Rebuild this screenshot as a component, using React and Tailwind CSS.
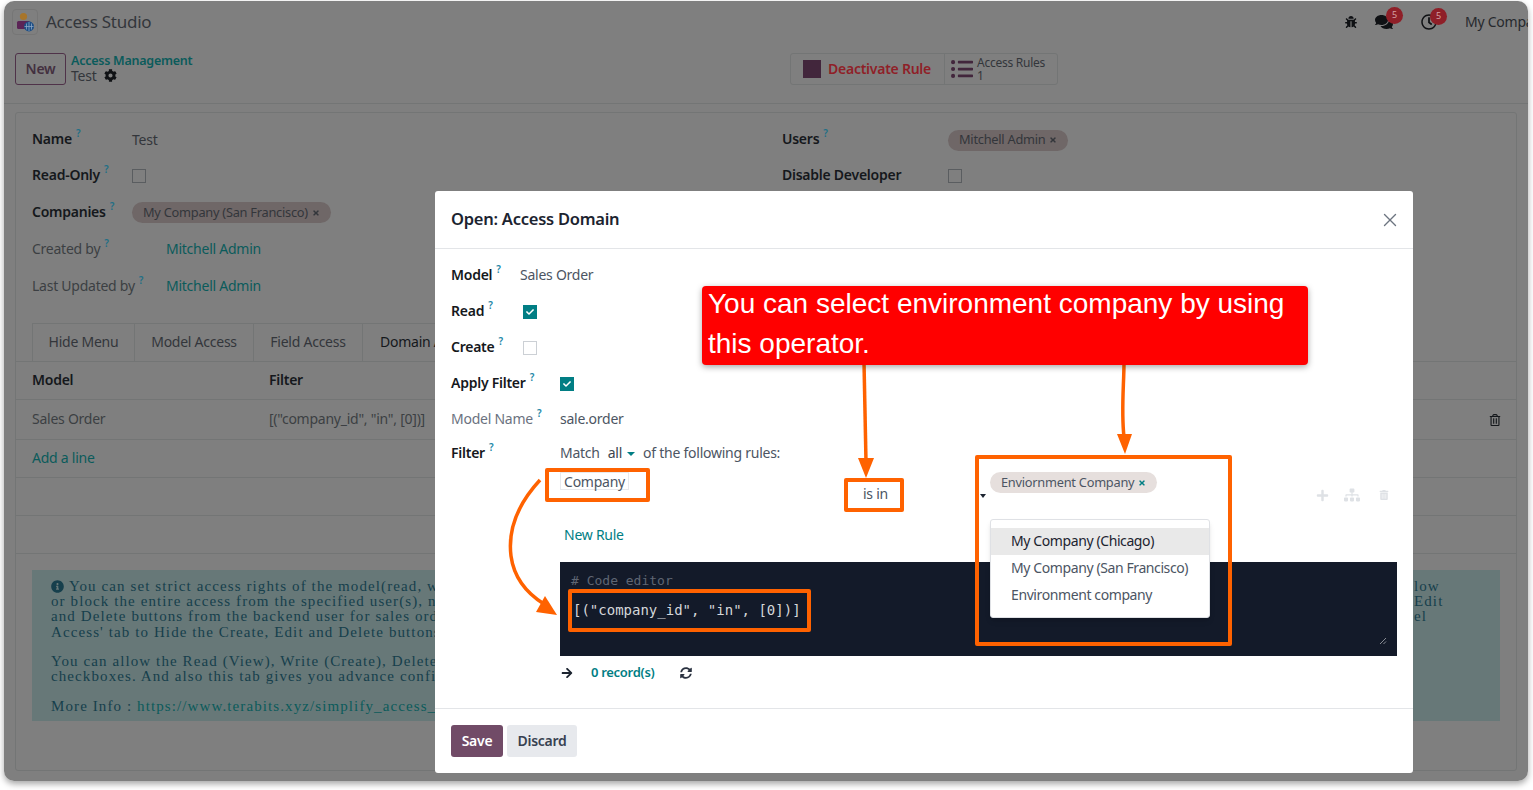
import React from "react";
import { FaBug, FaComments, FaRegClock, FaCog, FaListUl, FaRegTrashAlt, FaPlus, FaSitemap, FaTrashAlt, FaInfoCircle, FaArrowRight, FaSyncAlt, FaCheck, FaTimes } from "react-icons/fa";
import { X } from "lucide-react";

const Q = ({ c = "text-[#1f6f86]" }) => <sup className={`${c} text-[10px] ml-1 -top-[7px] relative font-semibold`}>?</sup>;

function Label({ children, w, dim, q, dimC = "text-[#3c3f43]" }) {
  return (
    <div className={`${w} shrink-0 whitespace-nowrap pb-[3px] ${dim ? `font-normal ${dimC}` : "font-semibold text-[#15181c]"}`}>
      {children}
      <Q c={q} />
    </div>
  );
}

function BgBox() {
  return <div className="w-[14px] h-[14px] border border-[#5a5d60]" />;
}

function Tag({ children }) {
  return (
    <span className="inline-flex items-center h-[21px] rounded-full bg-[#6f6767] px-[11px] text-[12.8px] text-[#33363b] whitespace-nowrap">
      {children}
      <FaTimes className="ml-1 text-[8px]" />
    </span>
  );
}

function Logo() {
  return (
    <div className="w-[26px] h-[26px] border border-[#767676] rounded-sm flex items-center justify-center">
      <svg width="22" height="22" viewBox="0 0 22 22">
        <circle cx="9.5" cy="5.5" r="3.6" fill="#a8752a" />
        <rect x="3" y="10" width="13" height="8" rx="1.5" fill="#5b2456" />
        <circle cx="15" cy="15.5" r="5" fill="#1d4f86" />
        <path d="M10.5 15.5h9M15 11v9M12.5 12.5v6M17.5 12.5v6" stroke="#8aa4c4" strokeWidth="0.8" fill="none" />
      </svg>
    </div>
  );
}

const alertRows = [
  ["You can set strict access rights of the model(read, write, create, delete),", "low", true],
  ["or block the entire access from the specified user(s), no matter which", "Edit"],
  ["and Delete buttons from the backend user for sales order, use the 'Model", "el"],
  ["Access' tab to Hide the Create, Edit and Delete buttons", ""],
  null,
  ["You can allow the Read (View), Write (Create), Delete, Export, Import", ""],
  ["checkboxes. And also this tab gives you advance configuration", ""],
  null,
];

function Background() {
  return (
    <div className="h-full flex flex-col bg-[#7f7f7f] text-[14px] text-[#33363b]">
      <div className="h-[45px] shrink-0 flex items-center pl-[8px] pr-0 pb-[4px]">
        <Logo />
        <span className="ml-[8px] text-[17px] text-[#33363b]">Access Studio</span>
        <div className="ml-auto flex items-center text-[#0f1114]">
          <FaBug className="text-[12px] mr-[18px]" />
          <span className="relative mr-[28px]">
            <FaComments className="text-[18px]" />
            <span className="absolute -top-[6px] left-[11px] w-[17px] h-[17px] rounded-full bg-[#8f1f28] text-[9px] text-[#d4a0a4] flex items-center justify-center">5</span>
          </span>
          <span className="relative mr-[28px]">
            <FaRegClock className="text-[16px]" />
            <span className="absolute -top-[6px] left-[9px] w-[17px] h-[17px] rounded-full bg-[#8f1f28] text-[9px] text-[#d4a0a4] flex items-center justify-center">5</span>
          </span>
          <span className="text-[14px] text-[#26292d] w-[63px] overflow-hidden whitespace-nowrap">My Company</span>
        </div>
      </div>
      <div className="h-[58px] shrink-0 flex items-start pt-[7px] pl-[11px] border-b border-[#737575]">
        <div className="w-[51px] h-[32px] border border-[#4f3249] rounded-[3px] flex items-center justify-center font-semibold text-[#43303f] pb-[2px]">New</div>
        <div className="ml-[5px] w-[130px] leading-[15px]">
          <div className="text-[#0b5b5b] font-semibold text-[12.5px] whitespace-nowrap">Access Management</div>
          <div className="flex items-center text-[#33363b]">Test<FaCog className="ml-2 text-[13px] text-[#101215]" /></div>
        </div>
        <div className="ml-[589px] w-[268px] h-[32px] flex border border-[#737575] rounded-[3px]">
          <div className="w-[154px] flex items-center border-r border-[#737575] pl-[12px]">
            <div className="w-[18px] h-[18px] bg-[#42263c] mr-[7px]" />
            <span className="text-[#8f1f28] font-semibold text-[14px] pb-[1px]">Deactivate Rule</span>
          </div>
          <div className="flex items-center pl-[6px]">
            <FaListUl className="text-[22px] text-[#42263c] mr-[4px]" />
            <div className="text-[12px] text-[#33363b] whitespace-nowrap">
              <div className="leading-[13px]">Access Rules</div>
              <div className="leading-[13px]">1</div>
            </div>
          </div>
        </div>
      </div>
      <div className="flex-1 px-[11px] pt-[8px] pb-[10px] flex">
        <div className="flex-1 border border-[#737575] rounded-[3px] flex flex-col overflow-hidden">
          <div className="h-[210px] shrink-0 flex pl-[16px] pt-[9px]">
            <div className="w-[750px]">
              <div className="h-[36px] flex items-center"><Label w="w-[100px]">Name</Label><span className="pb-[2px]">Test</span></div>
              <div className="h-[36px] flex items-center"><Label w="w-[100px]">Read-Only</Label><BgBox /></div>
              <div className="h-[37px] flex items-center"><Label w="w-[100px]">Companies</Label><Tag>My Company (San Francisco)</Tag></div>
              <div className="h-[37px] flex items-center"><Label w="w-[134px]" dim>Created by</Label><span className="text-[#0b5b5b] pb-[2px]">Mitchell Admin</span></div>
              <div className="h-[37px] flex items-center"><Label w="w-[134px]" dim>Last Updated by</Label><span className="text-[#0b5b5b] pb-[2px]">Mitchell Admin</span></div>
            </div>
            <div>
              <div className="h-[36px] flex items-center"><Label w="w-[166px]">Users</Label><Tag>Mitchell Admin</Tag></div>
              <div className="h-[36px] flex items-center"><div className="w-[166px] font-semibold text-[#15181c] pb-[3px]">Disable Developer</div><BgBox /></div>
            </div>
          </div>
          <div className="h-[39px] shrink-0 flex pl-[16px] border-b border-[#737575] items-end">
            {[["Hide Menu", "w-[103px]"], ["Model Access", "w-[120px]"], ["Field Access", "w-[110px]"]].map(([t, w]) => (
              <div key={t} className={`${w} h-[38px] border border-b-0 border-[#737575] -mr-px flex items-center justify-center text-[#33363b] pb-[3px]`}>{t}</div>
            ))}
            <div className="w-[73px] overflow-hidden h-[38px] border-t border-[#42263c] border-l border-[#737575] flex items-center pl-[17px] text-[#15181c] whitespace-nowrap pb-[3px]">Domain Access</div>
          </div>
          <div className="h-[38px] shrink-0 flex items-center pl-[16px] border-b border-[#737575] font-semibold text-[#15181c] pb-[3px]">
            <div className="w-[237px]">Model</div><div>Filter</div>
          </div>
          <div className="h-[40px] shrink-0 flex items-center pl-[16px] pr-[15px] border-b border-[#737575] text-[#3c3f43]">
            <div className="w-[237px] pb-[3px]">Sales Order</div><div className="pb-[3px]">[("company_id", "in", [0])]</div>
            <FaRegTrashAlt className="ml-auto text-[12px] text-[#15181c]" />
          </div>
          <div className="h-[38px] shrink-0 flex items-center pl-[16px] border-b border-[#737575] text-[#0b5b5b] pb-[3px]">Add a line</div>
          <div className="h-[38px] shrink-0 border-b border-[#737575]" />
          <div className="h-[38px] shrink-0 border-b border-[#737575]" />
          <div className="mx-[16px] mt-[16px] mb-[15px] h-[151px] shrink-0 bg-[#677878] pl-[19px] pr-[57px] pt-[9px] font-['Liberation_Serif',serif] text-[15px] leading-[15.2px] tracking-[1.1px] text-[#163f4c]">
            {alertRows.map((r, i) =>
              r ? (
                <div key={i} className="h-[15.2px] flex justify-between whitespace-nowrap overflow-hidden">
                  <span className="flex items-center">{r[2] && <FaInfoCircle className="mr-[5px] text-[13px]" />}{r[0]}</span>
                  <span className="w-[29px] shrink-0 text-left">{r[1]}</span>
                </div>
              ) : <div key={i} className="h-[14.5px]" />
            )}
            <div className="whitespace-nowrap">More Info : <span className="text-[#0b5b5b]">https://www.terabits.xyz/simplify_access_management</span></div>
          </div>
        </div>
      </div>
    </div>
  );
}

function Check({ on }) {
  return on ? (
    <div className="w-[14px] h-[14px] bg-[#017e84] flex items-center justify-center"><FaCheck className="text-white text-[8px]" /></div>
  ) : <div className="w-[14px] h-[14px] border border-[#ccd0d5] bg-white" />;
}

function Modal() {
  const q = "text-[#1e88a8]";
  return (
    <div className="absolute left-[431px] top-[190px] w-[978px] h-[582px] bg-white rounded-[3px] flex flex-col text-[14px] text-[#4c5563]">
      <div className="h-[58px] shrink-0 border-b border-[#e3e5e8] flex items-center px-[16px]">
        <span className="text-[16.5px] font-semibold text-[#1c2430]">Open: Access Domain</span>
        <X className="ml-auto -mr-[4px] text-[#6c7480]" size={22} strokeWidth={1.5} />
      </div>
      <div className="flex-1 relative pl-[16px] pr-[16px] pt-[9px]">
        <div className="h-[36px] flex items-center"><Label w="w-[69px]" q={q}>Model</Label><span className="pb-[3px]">Sales Order</span></div>
        <div className="h-[36px] flex items-center"><Label w="w-[72px]" q={q}>Read</Label><Check on /></div>
        <div className="h-[36px] flex items-center"><Label w="w-[72px]" q={q}>Create</Label><Check /></div>
        <div className="h-[36px] flex items-center"><Label w="w-[109px]" q={q}>Apply Filter</Label><Check on /></div>
        <div className="h-[35px] flex items-center"><Label w="w-[109px]" dim dimC="text-[#6b7280]" q={q}>Model Name</Label><span className="pb-[2px]">sale.order</span></div>
        <div className="flex">
          <div className="w-[109px] pt-[5px]"><Label w="w-[109px]" q={q}>Filter</Label></div>
          <div className="flex-1 min-w-0">
            <div className="h-[34px] flex items-center whitespace-nowrap pb-[3px]">
              Match<span className="ml-2 text-[#3c4450]">all</span>
              <span className="ml-[5px] mr-2 mt-[2px] border-x-[4px] border-x-transparent border-t-[4px] border-t-[#017e84]" />
              of the following rules:
            </div>
            <div className="h-[49px] flex items-start relative">
              <div className="w-[303px]">
                <span className="inline-block w-[69px] h-[18px] leading-[17px] border border-[#e7e9ed] text-center">Company</span>
              </div>
              <div className="w-[117px] pt-[12px]">is in</div>
              <div className="relative w-[300px] pl-[10px]">
                <span className="inline-flex items-center h-[21px] rounded-full bg-[#e6dfdd] px-[11px] text-[12.8px] text-[#4c5563] whitespace-nowrap">
                  Enviornment Company<FaTimes className="ml-1 text-[8px] text-[#017e84]" />
                </span>
                <span className="absolute left-0 top-[23px] border-x-[3px] border-x-transparent border-t-[4px] border-t-[#1c2430]" />
              </div>
              <div className="ml-auto flex items-center pt-[16px] pr-[8px] text-[#dee1e5]">
                <FaPlus className="text-[13px]" />
                <FaSitemap className="ml-[15px] text-[16px]" />
                <FaTrashAlt className="ml-[19px] text-[10px]" />
              </div>
            </div>
            <div className="h-[42px] pl-[4px] pt-[4px] text-[#017e84]">New Rule</div>
            <div className="h-[94px] bg-[#131a29] relative pl-[11px] pt-[10px] font-['DejaVu_Sans_Mono',monospace] tracking-normal overflow-hidden">
              <div className="text-[#5f6673] leading-[18px] text-[13px]"># Code editor</div>
              <div className="text-[#d5d7da] leading-[18px] text-[14px] mt-[11px] ml-[2px]">[("company_id", "in", [0])]</div>
              <svg className="absolute right-[10px] bottom-[11px]" width="8" height="8" viewBox="0 0 8 8"><path d="M1 7 7 1M4.5 7 7 4.5" stroke="#a8abb0" strokeWidth="0.8" /></svg>
            </div>
            <div className="h-[35px] flex items-center text-[#1c2430] pb-[2px]">
              <FaArrowRight className="text-[12px] ml-[1px]" />
              <span className="ml-[18px] text-[#017e84] font-semibold text-[13px] tracking-[-0.3px]">0 record(s)</span>
              <FaSyncAlt className="ml-[26px] text-[12px] text-[#2a3240]" />
            </div>
          </div>
        </div>
        <div className="absolute left-[555px] top-[270px] w-[220px] h-[99px] bg-white rounded-[3px] border border-[#dfe1e5] shadow-md pt-[8px] whitespace-nowrap tracking-[-0.4px]">
          <div className="h-[27px] flex items-center pl-[20px] pb-[3px] bg-[#e9e9e9] text-[#1c2430]">My Company (Chicago)</div>
          <div className="h-[27px] flex items-center pl-[20px] pb-[3px]">My Company (San Francisco)</div>
          <div className="h-[27px] flex items-center pl-[20px] pb-[3px]">Environment company</div>
        </div>
      </div>
      <div className="h-[65px] shrink-0 border-t border-[#e3e5e8] flex items-start pt-[16px] pl-[16px] gap-[4px]">
        <div className="w-[52px] h-[32px] rounded-[3px] bg-[#714b67] text-white font-semibold flex items-center justify-center pb-[2px]">Save</div>
        <div className="w-[70px] h-[32px] rounded-[3px] bg-[#e7e9ed] text-[#374151] font-semibold flex items-center justify-center pb-[2px]">Discard</div>
      </div>
    </div>
  );
}

function Annotations() {
  const box = "absolute border-[4px] border-[#ff6200] rounded-[2px]";
  return (
    <>
      <svg className="absolute left-0 top-0 pointer-events-none" width="1524" height="780" viewBox="0 0 1524 780">
        <g transform="translate(-4 -1)" fill="none" stroke="#ff6200" strokeWidth="3.5">
          <path d="M864 362 866 462" />
          <path d="M1124 362C1124 385 1121 410 1124 437" />
          <path d="M540 480C516 506 508 532 511 556 514 578 528 594 544 604" />
        </g>
        <g transform="translate(-4 -1)" fill="#ff6200">
          <path d="M858 458h16l-8 20z" />
          <path d="M1117 434h15l-7 20z" />
          <path d="M536 612 557 615 545 596z" />
        </g>
      </svg>
      <div className={`${box} left-[541px] top-[467px] w-[105px] h-[34px]`} />
      <div className={`${box} left-[840px] top-[477px] w-[60px] h-[34px]`} />
      <div className={`${box} left-[971px] top-[454px] w-[257px] h-[191px]`} />
      <div className={`${box} left-[564px] top-[588px] w-[243px] h-[43px]`} />
      <div className="absolute left-[698px] top-[285px] w-[606px] h-[79px] bg-[#ff0000] rounded-[4px] shadow-[0_2px_6px_rgba(0,0,0,0.35)] px-[6px] font-['Liberation_Sans',sans-serif] tracking-normal text-[28px] leading-[40px] text-white">
        <div className="-translate-y-[2px]">You can select environment company by using this operator.</div>
      </div>
    </>
  );
}

export default function App() {
  return (
    <div className="w-[1533px] h-[790px] bg-white overflow-hidden font-['Noto_Sans',sans-serif] tracking-[-0.25px] pt-[1px] pl-[4px]">
      <div className="relative w-[1524px] h-[780px] rounded-[10px] overflow-hidden shadow-[0_3px_6px_rgba(0,0,0,0.35)]">
        <Background />
        <Modal />
        <Annotations />
      </div>
    </div>
  );
}
